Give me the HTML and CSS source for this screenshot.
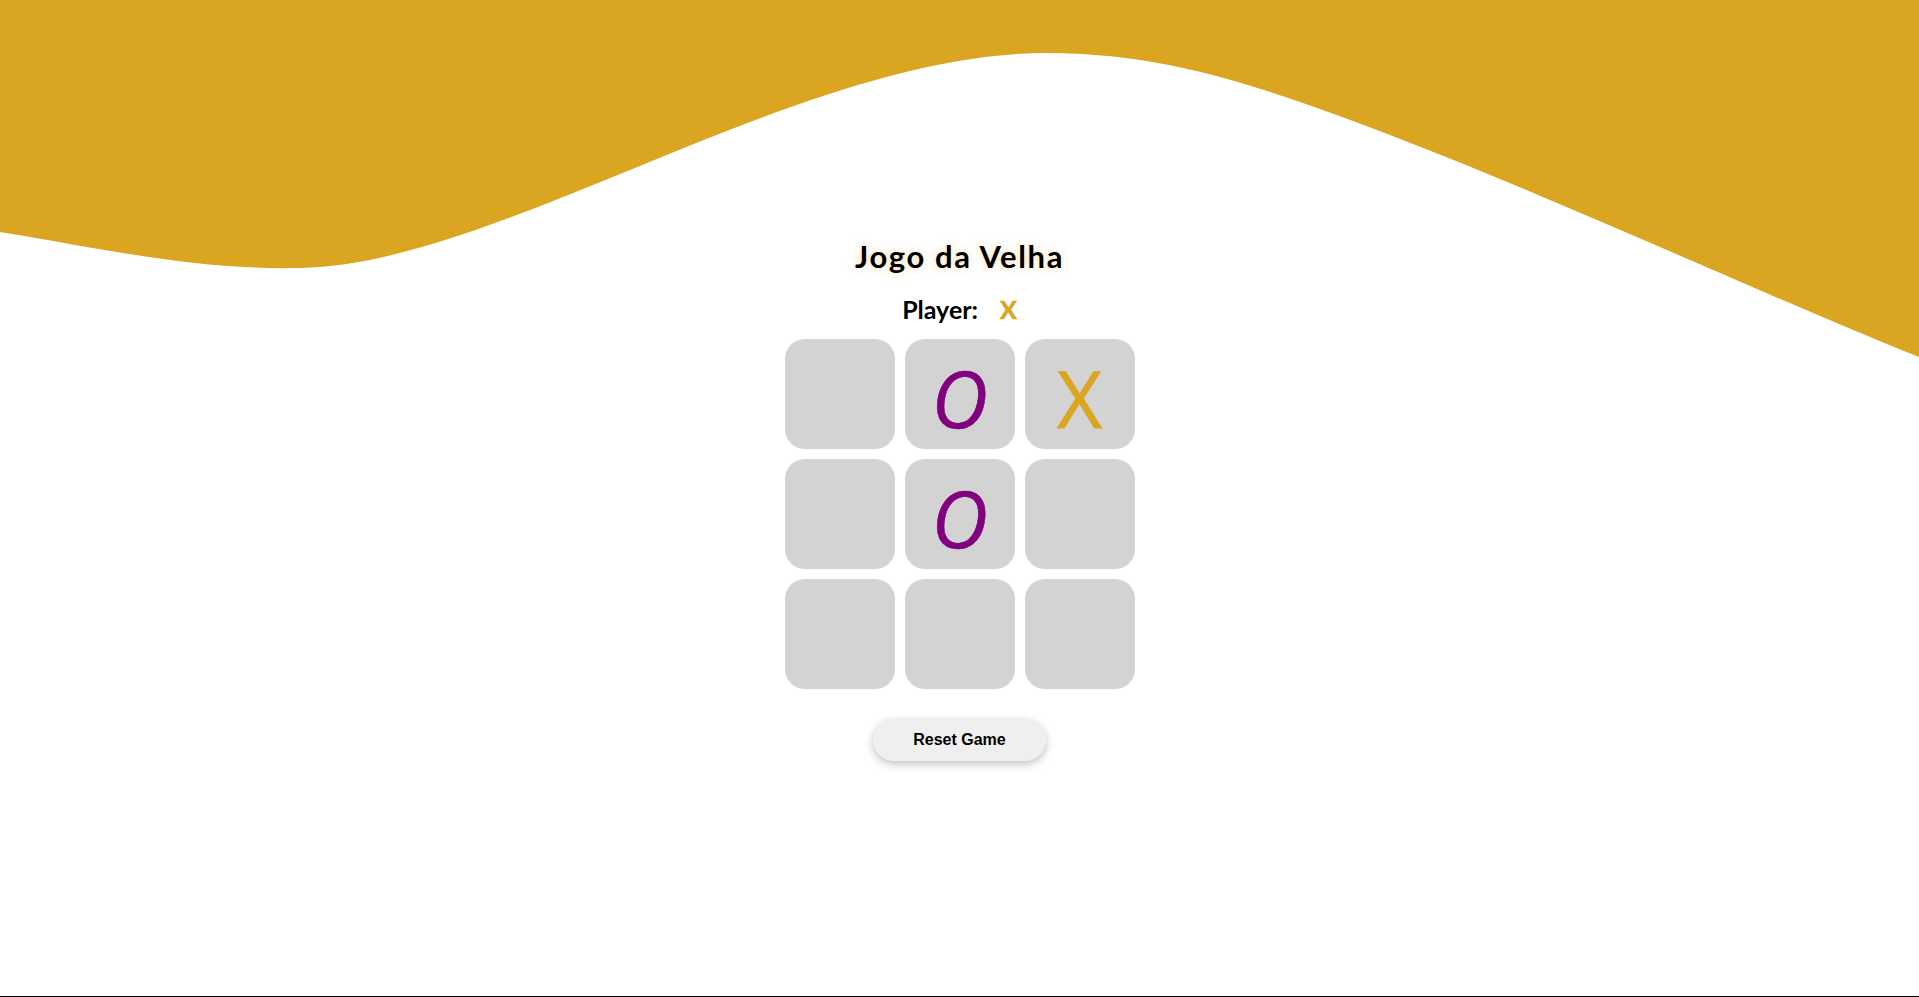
FILE: index.html
```html
<!DOCTYPE html>
<html lang="pt">
<head>
<meta charset="utf-8">
<title>Jogo da Velha</title>
<link rel="stylesheet" href="styles.css">
</head>
<body>
<div class="page">
  <svg class="wave" viewBox="0 0 1919 370" preserveAspectRatio="none" aria-hidden="true">
    <path fill="#DAA520" d="M0,0 H1919 V357 C1750,290 1500,171 1300,102 C1230,78 1150,53 1046,53 C800,53 500,265 300,268 C200,270 120,252 0,232 Z"/>
  </svg>
  <main class="game">
    <h1 class="title">Jogo da Velha</h1>
    <p class="player">Player: <span class="player-mark">X</span></p>
    <div class="board">
      <div class="cell"></div>
      <div class="cell"><span class="mark mark-o">O</span></div>
      <div class="cell"><span class="mark mark-x">X</span></div>
      <div class="cell"></div>
      <div class="cell"><span class="mark mark-o">O</span></div>
      <div class="cell"></div>
      <div class="cell"></div>
      <div class="cell"></div>
      <div class="cell"></div>
    </div>
    <button class="reset" type="button">Reset Game</button>
  </main>
</div>
</body>
</html>
```

FILE: styles.css
```css
html, body {
  margin: 0;
  padding: 0;
  background: #ffffff;
}

.page {
  position: relative;
  min-height: 100vh;
  box-sizing: border-box;
  border-bottom: 1px solid #000;
  overflow: hidden;
}

.wave {
  position: absolute;
  top: 0;
  left: 0;
  width: 100%;
  height: 370px;
  display: block;
  z-index: 0;
}

.game {
  position: relative;
  z-index: 1;
  display: flex;
  flex-direction: column;
  align-items: center;
  padding-top: 238px;
  font-family: Lato, "Liberation Sans", sans-serif;
}

.title {
  margin: 0;
  font-size: 31px;
  line-height: 36px;
  font-weight: 700;
  letter-spacing: 1.6px;
  color: #000;
  text-shadow: 0 0 10px rgba(218, 165, 32, 0.35);
}

.player {
  margin: 20px 0 0;
  font-size: 25px;
  line-height: 30px;
  font-weight: 700;
  color: #000;
}

.player-mark {
  color: #DAA520;
  margin-left: 16px;
  -webkit-text-stroke: 0.6px #DAA520;
}

.board {
  margin-top: 15px;
  display: grid;
  grid-template-columns: repeat(3, 110px);
  grid-auto-rows: 110px;
  gap: 10px;
}

.cell {
  background: #d3d3d3;
  border-radius: 20px;
  display: flex;
  align-items: center;
  justify-content: center;
}

.mark {
  font-family: "Open Sans", sans-serif;
  font-size: 78px;
  line-height: 1;
  font-weight: 400;
  padding-top: 8px;
}

.mark-o {
  color: #800080;
  font-style: italic;
  -webkit-text-stroke: 0.6px #800080;
}

.mark-x {
  color: #DAA520;
  -webkit-text-stroke: 0.8px #DAA520;
}

.reset {
  margin-top: 30px;
  width: 173px;
  height: 42px;
  border: none;
  border-radius: 21px;
  background: #efefef;
  box-shadow: 0 3px 8px rgba(0, 0, 0, 0.25);
  font-family: "Liberation Sans", Arial, sans-serif;
  font-size: 16px;
  font-weight: 700;
  color: #000;
  cursor: pointer;
}
```
